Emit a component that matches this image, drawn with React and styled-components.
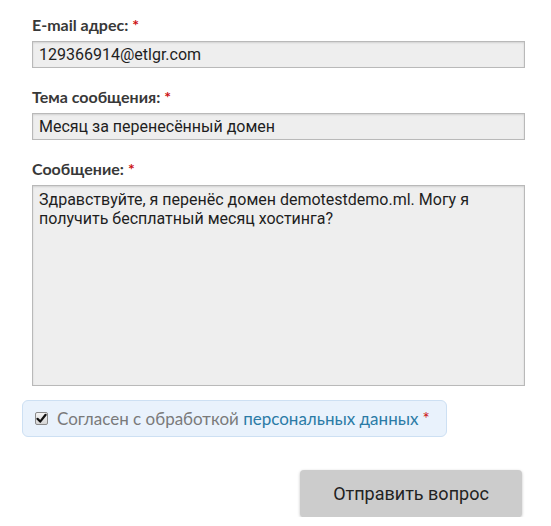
import React from "react";
import styled, { createGlobalStyle } from "styled-components";

const Global = createGlobalStyle`
  html, body { margin: 0; padding: 0; background: #fff; }
  body { font-family: Roboto, "Noto Sans", sans-serif; }
  * { box-sizing: border-box; }
`;

const Form = styled.form`
  width: 551px;
  padding: 16px 26px 0 32px;
  display: flex;
  flex-direction: column;
`;

const Field = styled.div`
  display: flex;
  flex-direction: column;
  margin-bottom: ${(p) => p.$gap || 20}px;
`;

const Label = styled.label`
  font-family: Lato, "Open Sans", sans-serif;
  font-weight: 700;
  font-size: 16px;
  line-height: 18px;
  color: #383838;
  margin-bottom: 7px;
`;

const Req = styled.span`
  color: #cc1111;
  margin-left: 4px;
`;

const boxStyles = `
  width: 100%;
  background: #eeeeee;
  border: 1px solid #b9b9b9;
  box-shadow: inset 0 1px 2px rgba(0,0,0,0.12);
  font-family: Roboto, "Noto Sans", sans-serif;
  font-size: 16px;
  color: #1e1e1e;
  outline: none;
`;

const Input = styled.input`
  ${boxStyles}
  height: 27px;
  padding: 0 6px;
`;

const Area = styled.textarea`
  ${boxStyles}
  height: 201px;
  padding: 4px 6px;
  line-height: 19px;
  resize: none;
`;

const Consent = styled.div`
  margin-left: -10px;
  width: 425px;
  height: 37px;
  display: flex;
  align-items: center;
  gap: 9px;
  padding-left: 12px;
  background: #e9f2fc;
  border: 1px solid #cde0f3;
  border-radius: 6px;
  font-family: Lato, "Open Sans", sans-serif;
  font-size: 17px;
  color: #7a7a7a;
  margin-bottom: 33px;
`;

const Check = styled.span`
  width: 13px;
  height: 13px;
  border: 1px solid #8a8a8a;
  border-radius: 2px;
  background: linear-gradient(#f4f4f4, #d6d6d6);
  display: flex;
  align-items: center;
  justify-content: center;
`;

const Link = styled.a`
  color: #2b7ba6;
  text-decoration: none;
`;

const ButtonRow = styled.div`
  display: flex;
  justify-content: flex-end;
  padding-right: 3px;
`;

const Button = styled.button`
  width: 222px;
  height: 47px;
  background: #cccccc;
  border: none;
  border-radius: 4px;
  box-shadow: 0 1px 3px rgba(0,0,0,0.25);
  font-family: Roboto, "Noto Sans", sans-serif;
  font-size: 18px;
  color: #222;
`;

export default function App() {
  return (
    <>
      <Global />
      <Form onSubmit={(e) => e.preventDefault()}>
        <Field>
          <Label>
            E-mail адрес:<Req>*</Req>
          </Label>
          <Input defaultValue="129366914@etlgr.com" />
        </Field>
        <Field>
          <Label>
            Тема сообщения:<Req>*</Req>
          </Label>
          <Input defaultValue="Месяц за перенесённый домен" />
        </Field>
        <Field $gap={14}>
          <Label>
            Сообщение:<Req>*</Req>
          </Label>
          <Area defaultValue="Здравствуйте, я перенёс домен demotestdemo.ml. Могу я получить бесплатный месяц хостинга?" />
        </Field>
        <Consent>
          <Check>
            <svg width="11" height="11" viewBox="0 0 11 11">
              <path d="M1.5 5.8 L4.2 8.6 L9.6 1.8" stroke="#111" strokeWidth="2.2" fill="none" strokeLinecap="round" strokeLinejoin="round" />
            </svg>
          </Check>
          <span>
            Согласен с обработкой <Link href="#">персональных данных</Link>
            <Req>*</Req>
          </span>
        </Consent>
        <ButtonRow>
          <Button type="submit">Отправить вопрос</Button>
        </ButtonRow>
      </Form>
    </>
  );
}
